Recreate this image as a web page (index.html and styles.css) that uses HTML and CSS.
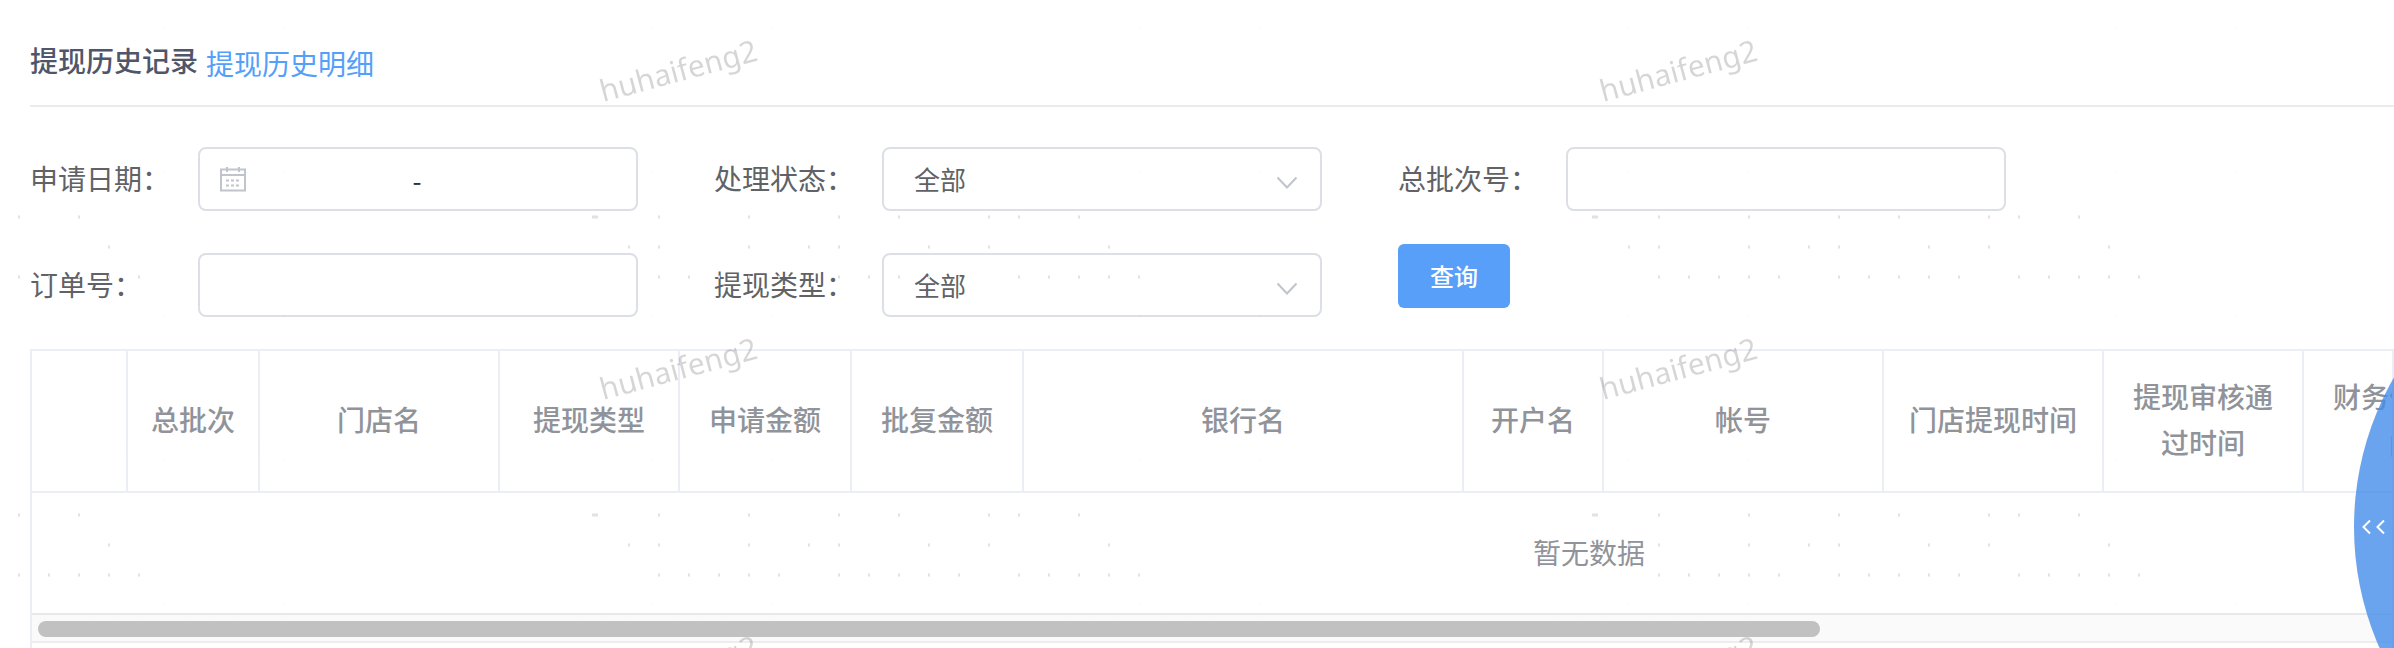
FILE: index.html
```html
<!DOCTYPE html>
<html lang="zh-CN">
<head>
<meta charset="utf-8">
<title>提现历史记录</title>
<link rel="stylesheet" href="styles.css">
</head>
<body>
<main class="page">
  <header class="page-head">
    <h1 class="title">提现历史记录</h1>
    <a class="title-link" href="#detail">提现历史明细</a>
  </header>

  <form class="filters">
    <div class="filter-col">
      <div class="field">
        <label class="label" for="date-start">申请日期：</label>
        <div class="control date-range">
          <svg class="calendar" viewBox="0 0 26 26" aria-hidden="true">
            <path d="M1 3.500H25V24.500H1ZM1 9H25M7 1V6M19 1V6"/>
            <path class="calendar-days" d="M6 14.500H20M6 19.500H20"/>
          </svg>
          <input class="date" id="date-start" type="text" aria-label="开始日期">
          <span class="dash">-</span>
          <input class="date" type="text" aria-label="结束日期">
        </div>
      </div>
      <div class="field">
        <label class="label" for="order">订单号：</label>
        <input class="control" id="order" type="text">
      </div>
    </div>

    <div class="filter-col">
      <div class="field">
        <label class="label" for="status">处理状态：</label>
        <div class="select-wrap">
          <select class="control select" id="status"><option>全部</option></select>
          <svg class="arrow" viewBox="0 0 22 14" aria-hidden="true"><path d="M1.500 1.500L11 11.500L20.500 1.500"/></svg>
        </div>
      </div>
      <div class="field">
        <label class="label" for="type">提现类型：</label>
        <div class="select-wrap">
          <select class="control select" id="type"><option>全部</option></select>
          <svg class="arrow" viewBox="0 0 22 14" aria-hidden="true"><path d="M1.500 1.500L11 11.500L20.500 1.500"/></svg>
        </div>
      </div>
    </div>

    <div class="filter-col filter-col-last">
      <div class="field">
        <label class="label" for="batch">总批次号：</label>
        <input class="control" id="batch" type="text">
      </div>
      <button class="search" type="button">查询</button>
    </div>
  </form>

  <section class="table-box">
    <div class="table-scroll">
      <table class="records">
        <colgroup>
          <col class="w96"><col class="w132"><col class="w240"><col class="w180"><col class="w172"><col class="w172"><col class="w440"><col class="w140"><col class="w280"><col class="w220"><col class="w200"><col class="w200"><col>
        </colgroup>
        <thead>
          <tr>
            <th></th><th>总批次</th><th>门店名</th><th>提现类型</th><th>申请金额</th><th>批复金额</th><th>银行名</th><th>开户名</th><th>帐号</th><th>门店提现时间</th><th>提现审核通过时间</th><th>财务付款时间</th><th></th>
          </tr>
        </thead>
        <tbody>
          <tr><td class="empty" colspan="13">暂无数据</td></tr>
        </tbody>
      </table>
    </div>
    <div class="scrollbar"><div class="thumb"></div></div>
  </section>
</main>

<button class="drawer" type="button" aria-label="展开">
  <svg class="drawer-icon" viewBox="0 0 24 16" aria-hidden="true"><path d="M9 1.500L2.500 8L9 14.500M23 1.500L16.500 8L23 14.500"/></svg>
</button>

<svg class="watermark" aria-hidden="true">
  <defs>
    <pattern id="mark" width="1000" height="298" patternUnits="userSpaceOnUse">
      <text class="mark-text" transform="translate(603 102) rotate(-15)">huhaifeng2</text>
      <path class="dots" d="M18 217h2m58 0h2m512 0h6m60 0h2m88 0h2m88 0h2m58 0h2m88 0h2M108 247h2m518 0h2m28 0h2m88 0h2m58 0h2m28 0h2m88 0h2m58 0h2M18 277h2m28 0h2m28 0h2m28 0h2m28 0h2m518 0h2m28 0h2m28 0h2m28 0h2m28 0h2m58 0h2m28 0h2m28 0h2m28 0h2m28 0h2"/>
    </pattern>
    <pattern id="faint" width="488" height="144" patternUnits="userSpaceOnUse">
      <path class="faint-dots" d="M78 16h2m34 0h2m10 0h2m22 0h2m10 0h2m22 0h2m10 0h2m22 0h2m10 0h2m22 0h2M103 28h2m58 0h2m10 0h2m70 0h2m34 0h2M91 40h2m10 0h2m10 0h2m22 0h2m34 0h2m10 0h2m22 0h2m10 0h2m10 0h2m34 0h2m10 0h2"/>
    </pattern>
  </defs>
  <rect width="100%" height="100%" fill="url(#mark)"/>
  <rect width="100%" height="100%" fill="url(#faint)"/>
</svg>
</body>
</html>
```
FILE: styles.css
```css
* {
  box-sizing: border-box;
}

body {
  margin: 0;
  background: #fff;
  color: #606266;
  font-family: "Noto Sans CJK SC", sans-serif;
  font-size: 28px;
  overflow: hidden;
}

input,
select,
button {
  font-family: inherit;
}

.page {
  display: flex;
  flex-direction: column;
  min-height: 100vh;
  padding-left: 30px;
}

.page-head {
  display: flex;
  align-items: flex-start;
  gap: 8px;
  padding: 40px 0 19px;
  border-bottom: 2px solid #ebebeb;
}

.title {
  margin: 0;
  color: #50566a;
  font-size: 28px;
  font-weight: 500;
  line-height: 40px;
}

.title-link {
  color: #549ffa;
  line-height: 46px;
  text-decoration: none;
}

.filters {
  display: flex;
  padding: 40px 0 32px;
}

.filter-col {
  display: flex;
  flex-direction: column;
  gap: 42px;
  width: 684px;
}

.filter-col-last {
  gap: 33px;
  align-items: flex-start;
}

.field {
  display: flex;
  align-items: flex-start;
}

.label {
  width: 168px;
  line-height: 62px;
  white-space: nowrap;
}

.control {
  width: 440px;
  height: 64px;
  border: 2px solid #dcdfe6;
  border-radius: 8px;
  background: #fff;
  color: #606266;
  font-size: 26px;
}

.date-range {
  display: flex;
  align-items: center;
  padding: 0 48px 0 20px;
}

.calendar {
  width: 26px;
  height: 26px;
  fill: none;
  stroke: #c0c4cc;
  stroke-width: 2;
}

.calendar-days {
  stroke-dasharray: 3 2;
}

.date {
  flex: 1;
  min-width: 0;
  border: 0;
  background: none;
}

.dash {
  color: #303133;
}

.select-wrap {
  position: relative;
}

.select {
  display: block;
  appearance: none;
  padding: 0 30px 2px;
}

.arrow {
  position: absolute;
  top: 29px;
  right: 24px;
  width: 22px;
  height: 14px;
  fill: none;
  stroke: #c0c4cc;
  stroke-width: 2;
}

.search {
  width: 112px;
  height: 64px;
  padding: 0 0 2px;
  border: 0;
  border-radius: 6px;
  background: #579ff8;
  color: #fff;
  font-size: 24px;
  font-weight: 500;
}

.table-box {
  flex: 1;
  border: 2px solid #ebeef5;
  border-bottom: 0;
}

.table-scroll {
  overflow: hidden;
}

.records {
  width: 3114px;
  table-layout: fixed;
  border-spacing: 0;
  color: #909399;
}

.records th {
  height: 142px;
  padding: 22px 20px 26px;
  border-right: 2px solid #ebeef5;
  border-bottom: 2px solid #ebeef5;
  font-weight: 500;
  line-height: 46px;
}

.empty {
  height: 120px;
  padding: 0 0 2px;
  text-align: center;
}

.w96 { width: 96px; }
.w132 { width: 132px; }
.w140 { width: 140px; }
.w172 { width: 172px; }
.w180 { width: 180px; }
.w200 { width: 200px; }
.w220 { width: 220px; }
.w240 { width: 240px; }
.w280 { width: 280px; }
.w440 { width: 440px; }

.scrollbar {
  padding: 6px 6px 4px;
  border-top: 2px solid #e8e8e8;
  border-bottom: 2px solid #ededed;
  background: #fafafa;
}

.thumb {
  width: 75.9%;
  height: 16px;
  border-radius: 8px;
  background: #c1c1c1;
}

.drawer {
  position: fixed;
  top: 227px;
  right: -560px;
  width: 600px;
  height: 600px;
  padding: 0 0 0 7px;
  border: 0;
  border-radius: 50%;
  background: rgba(69, 140, 234, 0.8);
  text-align: left;
}

.drawer-icon {
  display: block;
  width: 24px;
  height: 16px;
  fill: none;
  stroke: #fff;
  stroke-width: 2;
}

.watermark {
  position: fixed;
  inset: 0;
  width: 100%;
  height: 100%;
  pointer-events: none;
}

.mark-text {
  fill: rgba(0, 0, 0, 0.16);
  font-family: "Noto Sans", sans-serif;
  font-size: 30px;
}

.dots {
  stroke: #e2e2e2;
  stroke-width: 3;
}

.faint-dots {
  stroke: rgba(0, 0, 0, 0.016);
  stroke-width: 2;
}
```
